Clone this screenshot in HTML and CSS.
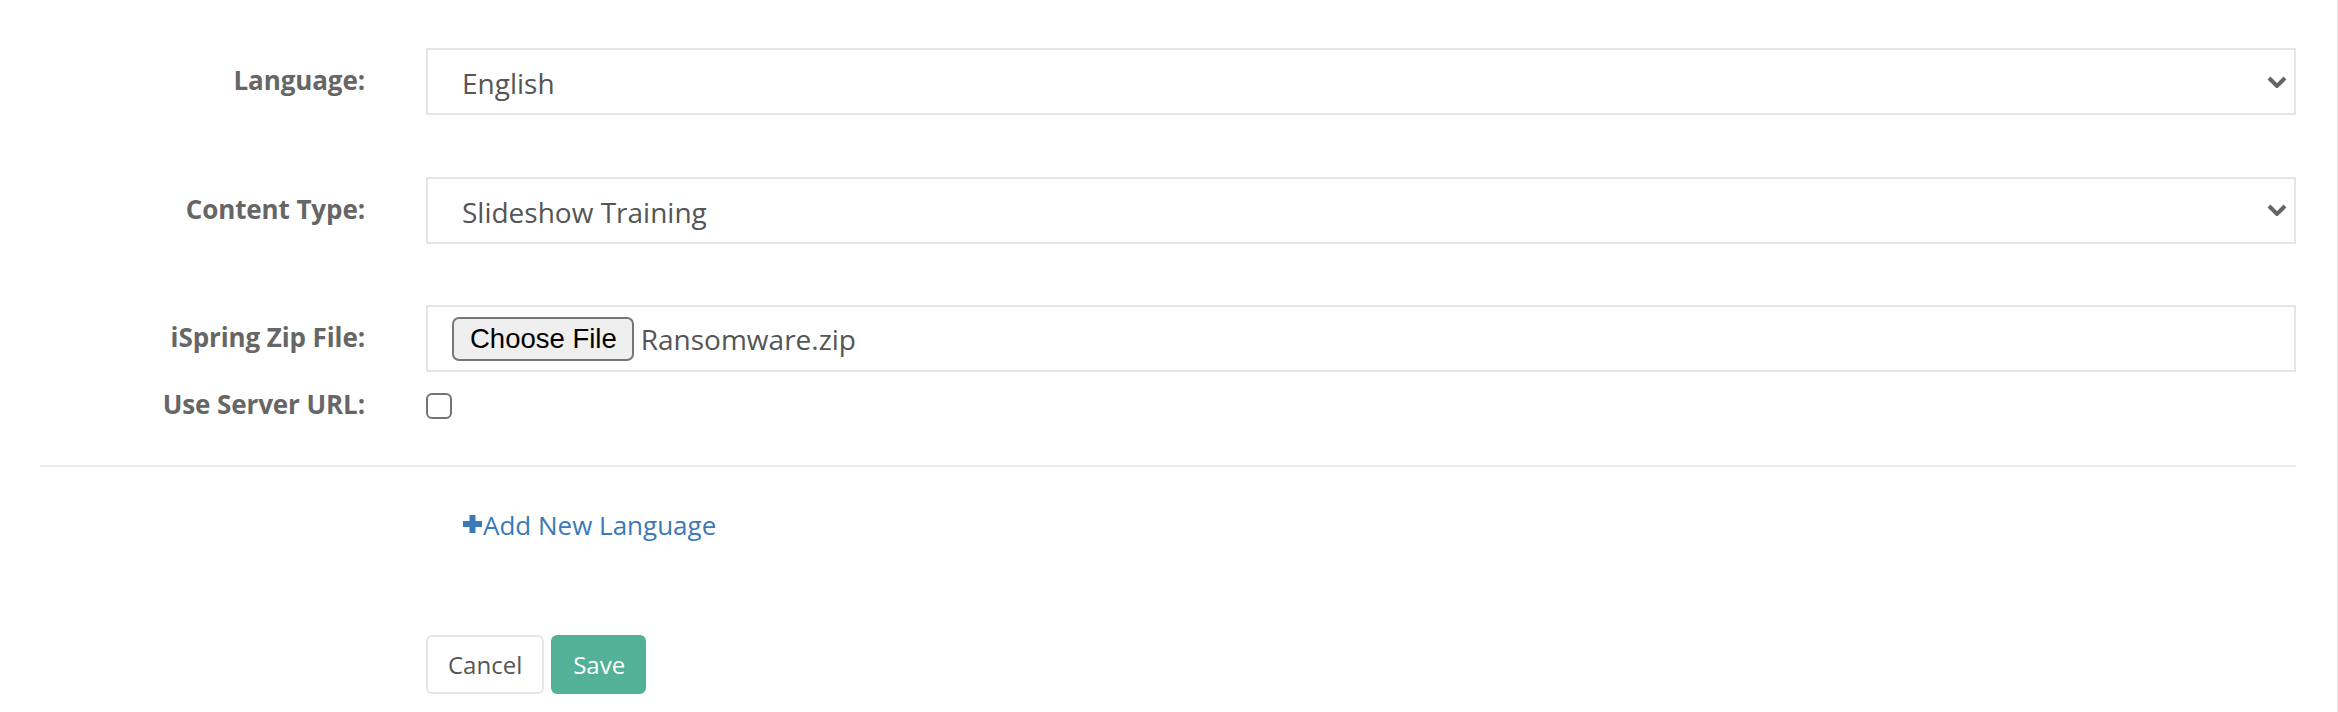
FILE: index.html
```html
<!DOCTYPE html>
<html lang="en">
<head>
<meta charset="utf-8">
<title>Language content</title>
<link rel="stylesheet" href="styles.css">
</head>
<body>
<div class="page">
  <form class="form">
    <div class="group">
      <label class="label">Language:</label>
      <div class="select">
        <span class="value">English</span>
        <svg class="chevron" width="20" height="12" viewBox="0 0 20 12"><path d="M2 2 L10 10 L18 2" fill="none" stroke="#666" stroke-width="4"/></svg>
      </div>
    </div>
    <div class="group">
      <label class="label">Content Type:</label>
      <div class="select">
        <span class="value">Slideshow Training</span>
        <svg class="chevron" width="20" height="12" viewBox="0 0 20 12"><path d="M2 2 L10 10 L18 2" fill="none" stroke="#666" stroke-width="4"/></svg>
      </div>
    </div>
    <div class="group group-file">
      <label class="label">iSpring Zip File:</label>
      <div class="file-box">
        <span class="file-btn">Choose File</span>
        <span class="file-name">Ransomware.zip</span>
      </div>
    </div>
    <div class="group group-check">
      <label class="label label-check">Use Server URL:</label>
      <div class="check-cell"><input class="check" type="checkbox"></div>
    </div>
  </form>
  <hr class="divider">
  <div class="add-row">
    <a class="add-link" href="#"><svg class="plus" width="21" height="20" viewBox="0 0 21 20"><rect x="7.5" y="1" width="6" height="18" fill="#3b79b7"/><rect x="1" y="7" width="19" height="6" fill="#3b79b7"/></svg>Add New Language</a>
  </div>
  <div class="actions">
    <button class="btn btn-cancel" type="button">Cancel</button>
    <button class="btn btn-save" type="button">Save</button>
  </div>
</div>
</body>
</html>
```

FILE: styles.css
```css
html, body {
  margin: 0;
  padding: 0;
  background: #fff;
}

body {
  font-family: "Open Sans", "Liberation Sans", sans-serif;
}

.page {
  box-sizing: border-box;
  min-height: 712px;
  border-right: 1px solid #e6e6e6;
  padding: 48px 41px 0 40px;
}

.form {
  margin: 0;
}

.group {
  display: grid;
  grid-template-columns: 325px 1fr;
  column-gap: 61px;
  align-items: center;
  margin-bottom: 61.5px;
}

.group-file {
  margin-bottom: 19px;
}

.group-check {
  margin-bottom: 0;
  height: 26px;
}

.label {
  text-align: right;
  font-weight: 700;
  font-size: 26px;
  letter-spacing: -0.1px;
  line-height: 38px;
  color: #666;
  padding-bottom: 3px;
}

.label-check {
  line-height: 26px;
  padding-bottom: 4px;
}

.select {
  box-sizing: border-box;
  height: 67px;
  border: 2px solid #e5e5e5;
  display: flex;
  align-items: center;
  padding: 3px 7px 0 34px;
}

.value {
  flex: 1;
  font-size: 28px;
  line-height: 40px;
  color: #555;
}

.chevron {
  display: block;
  margin-top: -3px;
}

.file-box {
  box-sizing: border-box;
  height: 67px;
  border: 2px solid #e5e5e5;
  display: flex;
  align-items: center;
  padding: 0 24px;
}

.file-btn {
  box-sizing: border-box;
  height: 44px;
  border: 2px solid #767676;
  border-radius: 7px;
  background: #efefef;
  font-family: "Liberation Sans", Arial, sans-serif;
  font-size: 27.5px;
  line-height: 40px;
  padding: 0 15px 0 16px;
  color: #000;
}

.file-name {
  margin-left: 7px;
  font-size: 28px;
  line-height: 40px;
  color: #555;
}

.check-cell {
  display: flex;
  align-items: center;
}

.check {
  appearance: none;
  -webkit-appearance: none;
  box-sizing: border-box;
  width: 26px;
  height: 26px;
  margin: 0;
  border: 2px solid #737373;
  border-radius: 6px;
  background: #fff;
}

.divider {
  border: 0;
  height: 2px;
  background: #ececec;
  margin: 48px 0 0 0;
}

.add-row {
  padding-left: 422px;
  margin-top: 38px;
}

.add-link {
  display: inline-flex;
  align-items: center;
  font-size: 26px;
  line-height: 40px;
  color: #3b79b7;
  text-decoration: none;
}

.plus {
  display: block;
  margin-right: 0;
  margin-top: -2px;
}

.actions {
  padding-left: 386px;
  margin-top: 90px;
  display: flex;
  gap: 7px;
}

.btn {
  box-sizing: border-box;
  height: 59px;
  border: 2px solid #e6e6e6;
  border-radius: 6px;
  font-family: "Open Sans", "Liberation Sans", sans-serif;
  font-size: 24px;
  line-height: 35px;
  padding: 0 20px;
  background: #fff;
  color: #555;
}

.btn-save {
  background: #52b197;
  border-color: #52b197;
  color: #fff;
  padding: 0 19px 0 20px;
}
```
